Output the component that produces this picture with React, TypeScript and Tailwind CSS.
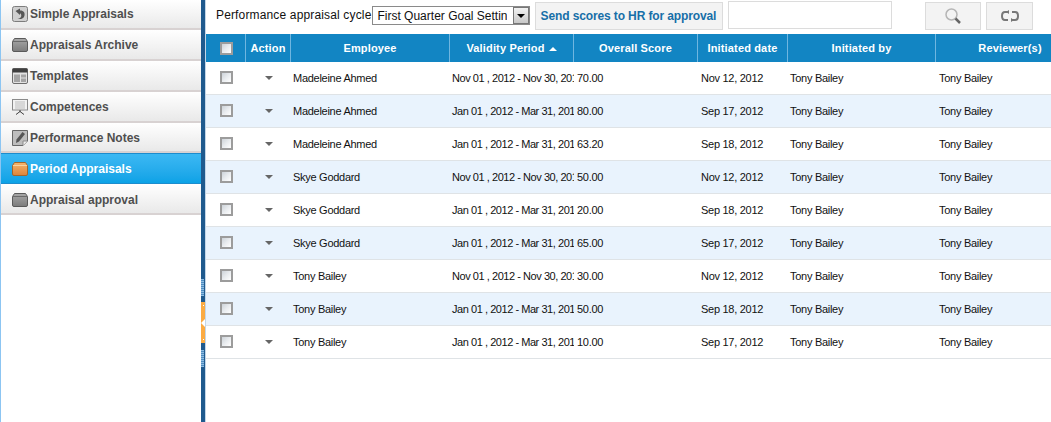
const F = "font-['Liberation_Sans',Arial,sans-serif]";

function Box({ children }: { children: React.ReactNode }) {
  return <span className="w-[16px] h-[17px] flex items-center justify-center shrink-0">{children}</span>;
}

function IconSimple() {
  return (
    <svg width="16" height="16" viewBox="0 0 16 16">
      <rect x="0.5" y="0.5" width="15" height="15" rx="2" fill="#cfcfcf" stroke="#7d7d7d" />
      <path d="M3.500 5 L8 2.500 V4.500 C12 4.500 13 7 12.500 9.500 C12 12.500 9 13.500 5.500 13 C8 12.500 9.500 11 9.300 9.500 C9.100 8 8.700 7.500 8 7.500 V9 Z" fill="#565656" />
    </svg>
  );
}
function IconFolder({ orange }: { orange?: boolean }) {
  const stroke = orange ? "#a4662a" : "#5a5a5a";
  const id = orange ? "fo" : "fg";
  return (
    <svg width="16" height="14" viewBox="0 0 16 14">
      <defs>
        <linearGradient id={id} x1="0" y1="0" x2="0" y2="1">
          <stop offset="0" stopColor={orange ? "#f5b56c" : "#a8a8a8"} />
          <stop offset="1" stopColor={orange ? "#dd843a" : "#7c7c7c"} />
        </linearGradient>
      </defs>
      <path d="M2.500 0.500 H13.500 L15.500 3.500 V12 Q15.500 13.500 14 13.500 H2 Q0.500 13.500 0.500 12 V3.500 Z" fill={`url(#${id})`} stroke={stroke} />
      <path d="M1 3.500 H15" stroke={orange ? "#f9d3a0" : "#6a6a6a"} />
    </svg>
  );
}
function IconTemplates() {
  return (
    <svg width="16" height="16" viewBox="0 0 16 16">
      <rect x="0.5" y="0.5" width="15" height="15" rx="1.500" fill="#e2e2e2" stroke="#6d6d6d" />
      <rect x="0.5" y="0.5" width="15" height="4" fill="#3f3f3f" />
      <rect x="2" y="6.500" width="6" height="7.500" fill="#a4a4a4" />
      <rect x="9" y="6.500" width="5" height="3" fill="#a4a4a4" />
      <rect x="9" y="10.500" width="5" height="3.500" fill="#a4a4a4" />
    </svg>
  );
}
function IconCompetences() {
  return (
    <svg width="16" height="16" viewBox="0 0 16 16">
      <rect x="0.500" y="0.500" width="15" height="10.500" fill="#f2f2f2" stroke="#8a8a8a" />
      <path d="M3 3 H13 M3 5 H13 M3 7 H13 M3 9 H13" stroke="#bdbdbd" />
      <path d="M8 11 V13 M8 12.500 L4 15.500 M8 12.500 L12 15.500" stroke="#3f3f3f" fill="none" />
    </svg>
  );
}
function IconNotes() {
  return (
    <svg width="16" height="16" viewBox="0 0 16 16">
      <path d="M0.500 0.500 H15.500 V11 L11 15.500 H0.500 Z" fill="#bdbdbd" stroke="#666666" />
      <path d="M11 15.500 V11 H15.500" fill="#eeeeee" stroke="#8a8a8a" />
      <path d="M10.500 2 L13 4 L7 11.500 L4 13 L4.500 9.500 Z" fill="#555555" />
    </svg>
  );
}

const menu = [
  { label: "Simple Appraisals", icon: <IconSimple />, h: "h-[30px]", pad: "" },
  { label: "Appraisals Archive", icon: <IconFolder />, h: "h-[31px]", pad: "" },
  { label: "Templates", icon: <IconTemplates />, h: "h-[31px]", pad: "" },
  { label: "Competences", icon: <IconCompetences />, h: "h-[31px]", pad: "" },
  { label: "Performance Notes", icon: <IconNotes />, h: "h-[30px]", pad: "pt-[1px]" },
  { label: "Period Appraisals", icon: <IconFolder orange />, active: true, h: "h-[31px]", pad: "" },
  { label: "Appraisal approval", icon: <IconFolder />, h: "h-[31px]", pad: "pt-[2px]" },
];

function Sidebar() {
  return (
    <div className="w-[201px] shrink-0 border-l border-[#8cc5f2] bg-white">
      {menu.map((m) =>
        m.active ? (
          <div key={m.label} className="h-[31px] flex items-center gap-[2px] pl-[11px] border-y border-[#1c8ccd] bg-gradient-to-b from-[#3bb8f3] to-[#0aa2e6] text-white text-[12px] font-bold">
            <Box>{m.icon}</Box>
            <span>{m.label}</span>
          </div>
        ) : (
          <div key={m.label} className={`${m.h} ${m.pad} flex items-center gap-[2px] pl-[11px] border-b-2 border-[#d8d2d2] bg-gradient-to-b from-white to-[#e9e9e9] text-[#4f4f4f] text-[12px] font-bold`}>
            <Box>{m.icon}</Box>
            <span>{m.label}</span>
          </div>
        )
      )}
    </div>
  );
}

function Dots() {
  return <div className="h-[17px] mr-[1px] bg-[repeating-linear-gradient(to_bottom,#8fbde2_0,#8fbde2_1px,#4f8cc0_1px,#4f8cc0_2px)]" />;
}

function Splitter() {
  return (
    <div className="w-[5px] shrink-0 bg-[#1f5a8e] pt-[279px] flex flex-col items-stretch border-r border-[#c3d6e8]">
      <Dots />
      <div className="mt-[6px] mb-[7px] h-[41px] bg-[#fbab43] flex flex-col items-center justify-between py-[3px]">
        <span className="w-[1px] h-[1px] bg-white" />
        <span className="w-0 h-0 border-y-[4px] border-y-transparent border-r-[4px] border-r-white" />
        <span className="w-[1px] h-[1px] bg-white" />
      </div>
      <Dots />
    </div>
  );
}

function Check() {
  return (
    <span className="block w-[13px] h-[13px] border-2 border-[#9c9c9c] bg-gradient-to-br from-[#cdd3d9] via-[#e9ecef] to-white" />
  );
}

const rows = [
  ["Madeleine Ahmed", "Nov 01 , 2012 - Nov 30, 2012", "70.00", "Nov 12, 2012"],
  ["Madeleine Ahmed", "Jan 01 , 2012 - Mar 31, 2012", "80.00", "Sep 17, 2012"],
  ["Madeleine Ahmed", "Jan 01 , 2012 - Mar 31, 2012", "63.20", "Sep 18, 2012"],
  ["Skye Goddard", "Nov 01 , 2012 - Nov 30, 2012", "50.00", "Nov 12, 2012"],
  ["Skye Goddard", "Jan 01 , 2012 - Mar 31, 2012", "20.00", "Sep 18, 2012"],
  ["Skye Goddard", "Jan 01 , 2012 - Mar 31, 2012", "65.00", "Sep 17, 2012"],
  ["Tony Bailey", "Nov 01 , 2012 - Nov 30, 2012", "30.00", "Nov 12, 2012"],
  ["Tony Bailey", "Jan 01 , 2012 - Mar 31, 2012", "50.00", "Sep 18, 2012"],
  ["Tony Bailey", "Jan 01 , 2012 - Mar 31, 2012", "10.00", "Sep 17, 2012"],
];

const grid = "grid grid-cols-[40px_45px_159px_124px_124px_90px_148px_115px]";

function Head({ children, className = "" }: { children?: React.ReactNode; className?: string }) {
  return <div className={`border-r border-[#6fb6e0] flex items-center justify-center text-white font-bold text-[11px] tracking-[0.15px] ${className}`}>{children}</div>;
}

function Table() {
  return (
    <div className="w-[845px] overflow-hidden">
      <div className={`${grid} h-[28px] bg-[#1285c3]`}>
        <Head className="pl-[1px]"><Check /></Head>
        <Head>Action</Head>
        <Head>Employee</Head>
        <Head>
          Validity Period
          <span className="ml-[4px] mt-[1px] w-0 h-0 border-x-[4px] border-x-transparent border-b-[4px] border-b-white" />
        </Head>
        <Head>Overall Score</Head>
        <Head>Initiated date</Head>
        <Head>Initiated by</Head>
        <Head className="border-r-0 pl-[33px]">Reviewer(s)</Head>
      </div>
      {rows.map((r, i) => (
        <div key={i} className={`${grid} h-[33px] border-b border-[#dfe3e6] text-[11px] tracking-[-0.28px] text-[#111111] ${i % 2 ? "bg-[#e9f3fd]" : "bg-white"}`}>
          <div className="flex items-center justify-center pl-[1px] pb-[1px]"><Check /></div>
          <div className="flex items-center justify-center pb-[1px]">
            <span className="w-0 h-0 border-x-[4px] border-x-transparent border-t-[4px] border-t-[#666666]" />
          </div>
          <div className="flex items-center pl-[2px]">{r[0]}</div>
          <div className="flex items-center pl-[2px] overflow-hidden whitespace-nowrap tracking-[-0.45px]">{r[1]}</div>
          <div className="flex items-center pl-[3px]">{r[2]}</div>
          <div className="flex items-center pl-[3px]">{r[3]}</div>
          <div className="flex items-center pl-[2px]">Tony Bailey</div>
          <div className="flex items-center pl-[3px]">Tony Bailey</div>
        </div>
      ))}
    </div>
  );
}

function Toolbar() {
  return (
    <div className="h-[34px] flex items-start text-[12px] text-[#111111]">
      <span className="ml-[10px] mt-[8px] leading-[14px] tracking-[0.15px] whitespace-nowrap">Performance appraisal cycle</span>
      <div className="ml-[1px] mt-[6px] w-[158px] h-[19px] border border-[#8a8a8a] bg-white flex items-center pl-[4px] justify-between overflow-hidden">
        <span className="whitespace-nowrap overflow-hidden w-[130px]">First Quarter Goal Setting</span>
        <span className="w-[16px] h-[17px] border border-[#777777] bg-gradient-to-b from-[#f2f2f2] to-[#c8c8c8] flex items-center justify-center shrink-0">
          <span className="w-0 h-0 border-x-[4px] border-x-transparent border-t-[4px] border-t-black" />
        </span>
      </div>
      <button className="ml-[5px] mt-[2px] w-[188px] h-[28px] border border-[#dcdcdc] bg-[#f3f3f3] text-[#176fa8] font-bold text-[12px] tracking-[-0.12px] whitespace-nowrap pr-[2px]">
        Send scores to HR for approval
      </button>
      <div className="ml-[5px] mt-[1px] w-[164px] h-[28px] border border-[#dcdcdc] bg-white" />
      <button className="ml-[33px] mt-[2px] w-[56px] h-[28px] border border-[#dcdcdc] bg-[#f3f3f3] flex items-center justify-center">
        <svg width="18" height="18" viewBox="0 0 18 18" fill="none">
          <circle cx="7.500" cy="7.500" r="5.500" stroke="#b5b5b5" strokeWidth="1.500" />
          <path d="M11.500 11.500 L16 16" stroke="#666666" strokeWidth="2.500" />
        </svg>
      </button>
      <button className="ml-[5px] mt-[2px] w-[47px] h-[28px] border border-[#dcdcdc] bg-[#f3f3f3] flex items-center justify-center">
        <svg width="20" height="12" viewBox="0 0 20 12" fill="none" stroke="#777777" strokeWidth="2">
          <path d="M8 2 H5 C1 2 1 10 5 10 H8" />
          <path d="M12 10 H15 C19 10 19 2 15 2 H12" />
          <path d="M9 0 L6 2 L9 4 Z M11 8 L14 10 L11 12 Z" fill="#777777" stroke="none" />
        </svg>
      </button>
    </div>
  );
}

export default function App() {
  return (
    <div className={`${F} w-[1051px] h-[422px] overflow-hidden flex bg-white`}>
      <Sidebar />
      <Splitter />
      <div className="flex-1 min-w-0">
        <Toolbar />
        <Table />
      </div>
    </div>
  );
}
